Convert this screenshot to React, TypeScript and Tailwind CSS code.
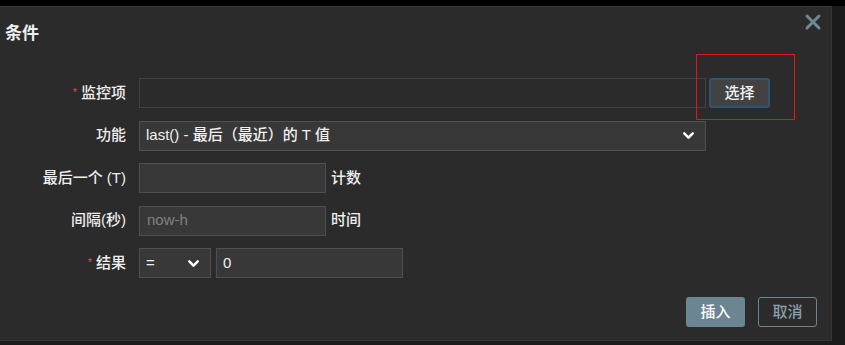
import { ChevronDown, X } from 'lucide-react';

const font = { fontFamily: '"Liberation Sans", "Noto Sans CJK SC", sans-serif' };

const Label = ({ text, required }: { text: string; required?: boolean }) => (
  <div className="w-[127px] shrink-0 text-right text-[15px] font-medium text-[#eeeeee] pr-[1px]">
    {required && <span className="text-[#d9534f] text-[11px] mr-[4px] relative -top-[2px]">*</span>}
    {text}
  </div>
);

const SelectBox = ({ value, width }: { value: string; width: string }) => (
  <div
    className={`${width} h-[30px] flex items-center justify-between bg-[#383838] border border-[#4f4f4f] pl-[6px] pr-[8px] text-[15px] font-medium text-[#f0f0f0]`}
  >
    <span>{value}</span>
    <ChevronDown className="w-[17px] h-[17px] text-white" strokeWidth={3.5} />
  </div>
);

export default function App() {
  return (
    <div className="w-[845px] h-[345px] bg-[#1b1b1b] flex flex-col overflow-hidden" style={font}>
      <div className="h-[6px] bg-black shrink-0" />
      <div className="relative w-[832px] h-[335px] bg-[#2b2b2b] border-t border-b border-r border-[#363636] flex flex-col">
        {/* Header */}
        <div className="pl-[5px] pt-[15px]">
          <h2 className="text-[17px] font-bold text-[#eeeeee] leading-[24px]">条件</h2>
        </div>
        <X className="absolute top-[3px] right-[6px] w-[24px] h-[24px] text-[#6f8796]" strokeWidth={3} />

        {/* Form */}
        <div className="flex flex-col gap-[12.5px] mt-[32px]">
          <div className="flex items-center gap-[12px]">
            <Label text="监控项" required />
            <div className="flex items-center gap-[3px]">
              <div className="w-[567px] h-[30px] border border-[#434343] bg-[#2b2b2b]" />
              <button className="w-[61px] h-[30px] bg-[#424242] border-2 border-[#2e5674] rounded-[3px] text-[15px] font-medium text-[#f2f2f2]">
                选择
              </button>
            </div>
          </div>

          <div className="flex items-center gap-[12px]">
            <Label text="功能" />
            <SelectBox value="last() - 最后（最近）的 T 值" width="w-[567px]" />
          </div>

          <div className="flex items-center gap-[12px]">
            <Label text="最后一个 (T)" />
            <div className="w-[187px] h-[30px] bg-[#383838] border border-[#4f4f4f]" />
            <span className="text-[15px] font-medium text-[#eeeeee] -ml-[7px]">计数</span>
          </div>

          <div className="flex items-center gap-[12px]">
            <Label text="间隔(秒)" />
            <div className="w-[187px] h-[30px] bg-[#383838] border border-[#4f4f4f] flex items-center pl-[7px] text-[15px] text-[#808080]">
              now-h
            </div>
            <span className="text-[15px] font-medium text-[#eeeeee] -ml-[7px]">时间</span>
          </div>

          <div className="flex items-center gap-[12px]">
            <Label text="结果" required />
            <div className="flex items-center gap-[5px]">
              <SelectBox value="=" width="w-[72px]" />
              <div className="w-[187px] h-[30px] bg-[#383838] border border-[#4f4f4f] flex items-center pl-[6px] text-[15px] font-medium text-[#f0f0f0]">
                0
              </div>
            </div>
          </div>
        </div>

        {/* Footer */}
        <div className="flex justify-end gap-[13px] pr-[14px] mt-auto mb-[13px]">
          <button className="w-[59px] h-[30px] bg-[#6b8593] rounded-[3px] text-[15px] font-medium text-white">插入</button>
          <button className="w-[59px] h-[30px] border border-[#6b8593] rounded-[3px] text-[15px] font-medium text-[#8aa0ab]">取消</button>
        </div>

        {/* annotation box */}
        <div className="absolute left-[696px] top-[47px] w-[99px] h-[66px] border border-[#e8141c] pointer-events-none" />
      </div>
    </div>
  );
}
